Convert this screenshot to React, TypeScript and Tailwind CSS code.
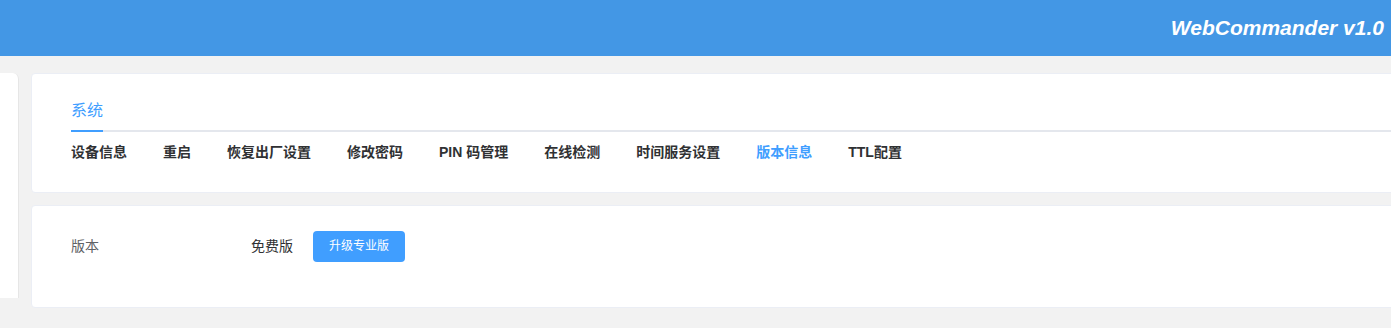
import React from "react";

const navItems = [
  "设备信息",
  "重启",
  "恢复出厂设置",
  "修改密码",
  "PIN 码管理",
  "在线检测",
  "时间服务设置",
  "版本信息",
  "TTL配置",
];

export default function App() {
  return (
    <div
      className="w-[1391px] h-[328px] overflow-hidden bg-[#f2f2f2]"
      style={{ fontFamily: '"Liberation Sans", "Noto Sans CJK SC", sans-serif' }}
    >
      <header className="h-[56px] bg-[#4397e5] flex items-center justify-end pr-[7px]">
        <span className="text-white text-[21px] font-bold italic">WebCommander v1.0</span>
      </header>
      <div className="flex gap-3 pt-[17px]">
        <aside className="w-[19px] h-[225px] shrink-0 bg-white rounded-tr-[6px] border-r border-[#e6e6e6]" />
        <main className="flex-1 -mr-3 flex flex-col gap-3">
          <section className="bg-white border border-[#ebeef5] rounded-[4px] h-[120px] pl-[39px] pt-[18px]">
            <div className="h-[40px] flex items-end border-b-2 border-[#e4e7ed]">
              <div className="h-[40px] flex items-center text-[16px] text-[#409eff] border-b-2 border-[#409eff] -mb-[2px]">
                系统
              </div>
            </div>
            <nav className="flex gap-9 pt-[10px] text-[14px] font-bold leading-[20px] text-[#303133]">
              {navItems.map((t) => (
                <span key={t} className={t === "版本信息" ? "text-[#409eff]" : ""}>
                  {t}
                </span>
              ))}
            </nav>
          </section>
          <section className="bg-white border border-[#ebeef5] rounded-[4px] h-[103px] pl-[39px] pt-[24px]">
            <div className="flex items-center h-[32px] text-[14px]">
              <span className="w-[180px] text-[#606266]">版本</span>
              <span className="text-[#303133]">免费版</span>
              <button className="ml-[20px] w-[92px] h-[31px] rounded-[4px] bg-[#409eff] text-white text-[12px]">
                升级专业版
              </button>
            </div>
          </section>
        </main>
      </div>
    </div>
  );
}
